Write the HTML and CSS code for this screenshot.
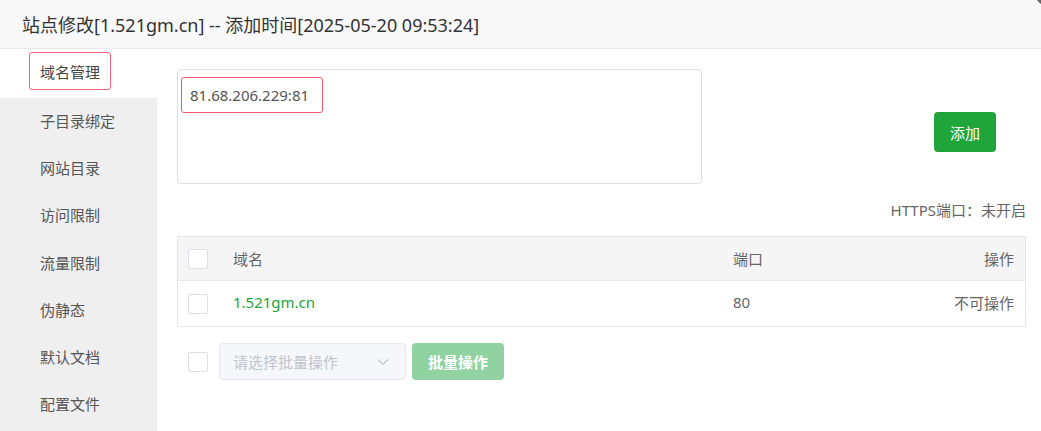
FILE: index.html
```html
<!DOCTYPE html>
<html lang="zh-CN">
<head>
<meta charset="utf-8">
<title>站点修改</title>
<link rel="stylesheet" href="styles.css">
</head>
<body>
<div class="dialog">
  <div class="header">
    <span class="title">站点修改[1.521gm.cn] -- 添加时间[2025-05-20 09:53:24]</span>
    <span class="close"></span>
  </div>
  <div class="body">
    <ul class="sidebar">
      <li class="item active"><span class="mark">域名管理</span></li>
      <li class="item">子目录绑定</li>
      <li class="item">网站目录</li>
      <li class="item">访问限制</li>
      <li class="item">流量限制</li>
      <li class="item">伪静态</li>
      <li class="item">默认文档</li>
      <li class="item">配置文件</li>
    </ul>
    <div class="main">
      <div class="add-row">
        <div class="textarea"><span class="entry">81.68.206.229:81</span></div>
        <button class="btn-add">添加</button>
      </div>
      <div class="https">HTTPS端口：未开启</div>
      <div class="table">
        <div class="tr thead">
          <div class="c-check"><span class="cb"></span></div>
          <div class="c-name">域名</div>
          <div class="c-port">端口</div>
          <div class="c-op">操作</div>
        </div>
        <div class="tr">
          <div class="c-check"><span class="cb"></span></div>
          <div class="c-name link">1.521gm.cn</div>
          <div class="c-port">80</div>
          <div class="c-op">不可操作</div>
        </div>
      </div>
      <div class="batch">
        <span class="cb"></span>
        <div class="select">
          <span>请选择批量操作</span>
          <svg class="chev" width="12" height="8" viewBox="0 0 12 8"><path d="M1 1.5 L6 6.2 L11 1.5" fill="none" stroke="#c0c4cc" stroke-width="1.2"/></svg>
        </div>
        <button class="btn-batch">批量操作</button>
      </div>
    </div>
  </div>
</div>
</body>
</html>
```
FILE: styles.css
```css
* { box-sizing: border-box; }
html, body { margin: 0; padding: 0; background: #fff; }
body {
  font-family: "Noto Sans", "Noto Sans CJK SC", sans-serif;
  font-size: 15px;
  color: #555;
  width: 1041px;
  height: 431px;
  overflow: hidden;
}
.dialog { position: relative; width: 1041px; height: 431px; }
.header {
  height: 49px;
  background: #f8f8f8;
  border-bottom: 1px solid #eaeaea;
  padding-left: 22px;
  display: flex;
  align-items: center;
}
.title { font-size: 18px; color: #333; letter-spacing: 0; }
.close {
  position: absolute;
  right: -22px;
  top: -22px;
  width: 30px;
  height: 30px;
  border-radius: 50%;
  background: #666;
  border: 2px solid #fff;
}
.body { display: flex; height: 382px; }
.sidebar {
  list-style: none;
  margin: 0;
  padding: 0;
  width: 157px;
  background: #efefef;
  flex: none;
}
.item {
  height: 47.2px;
  display: flex;
  align-items: center;
  padding-left: 40px;
  padding-bottom: 2px;
  color: #555;
}
.item.active {
  background: #fff;
  height: 49px;
  padding-left: 29px;
  align-items: flex-start;
  padding-top: 3px;
  padding-bottom: 0;
}
.mark {
  display: inline-flex;
  align-items: center;
  height: 38px;
  width: 82px;
  padding: 0 0 0 10px;
  border: 1.5px solid #f0627a;
  border-radius: 3px;
  color: #444;
}
.main { flex: 1; padding: 20px 15px 0 20px; }
.add-row { display: flex; align-items: flex-start; }
.textarea {
  width: 525px;
  height: 115px;
  border: 1px solid #dcdfe6;
  border-radius: 4px;
  padding: 7px 3px;
}
.entry {
  display: inline-flex;
  align-items: center;
  height: 36px;
  padding: 0 8px;
  border: 1.5px solid #f0566a;
  border-radius: 3px;
  color: #555;
  width: 142px;
}
.btn-add {
  margin: 43px 30px 0 auto;
  width: 62px;
  height: 40px;
  border: none;
  border-radius: 4px;
  background: #20a53a;
  color: #fff;
  font-family: inherit;
  font-size: 15px;
  padding: 0;
}
.https {
  text-align: right;
  color: #666;
  margin-top: 16px;
  height: 20px;
  line-height: 20px;
}
.table {
  margin-top: 16px;
  border: 1px solid #e6e6e6;
  border-bottom-color: #e8e8e8;
}
.tr {
  display: flex;
  align-items: center;
  height: 45px;
  color: #666;
}
.tr .c-name, .tr .c-port, .tr .c-op { padding-bottom: 3px; }
.thead { background: #f5f5f5; height: 44px; border-bottom: 1px solid #e8e8ec; }
.thead .c-name, .thead .c-port, .thead .c-op { padding-bottom: 0; }
.c-check { width: 55px; padding-left: 10px; display: flex; }
.c-name { width: 500px; }
.c-port { flex: 1; }
.c-op { width: 120px; text-align: right; padding-right: 11px; }
.link { color: #20a53a; }
.cb {
  display: inline-block;
  width: 20px;
  height: 20px;
  border: 1px solid #dcdfe6;
  border-radius: 2px;
  background: #fff;
}
.batch {
  display: flex;
  align-items: center;
  margin-top: 16px;
  padding-left: 11px;
}
.select {
  margin-left: 11px;
  width: 187px;
  height: 37px;
  background: #f5f7fa;
  border: 1px solid #e4e7ed;
  border-radius: 4px;
  display: flex;
  align-items: center;
  justify-content: space-between;
  padding: 0 16px 0 13px;
  color: #c0c4cc;
}
.btn-batch {
  margin-left: 6px;
  width: 92px;
  height: 37px;
  border: none;
  border-radius: 4px;
  background: #90d3a0;
  color: #fff;
  font-family: inherit;
  font-size: 15px;
  font-weight: bold;
  padding: 0;
}
```
